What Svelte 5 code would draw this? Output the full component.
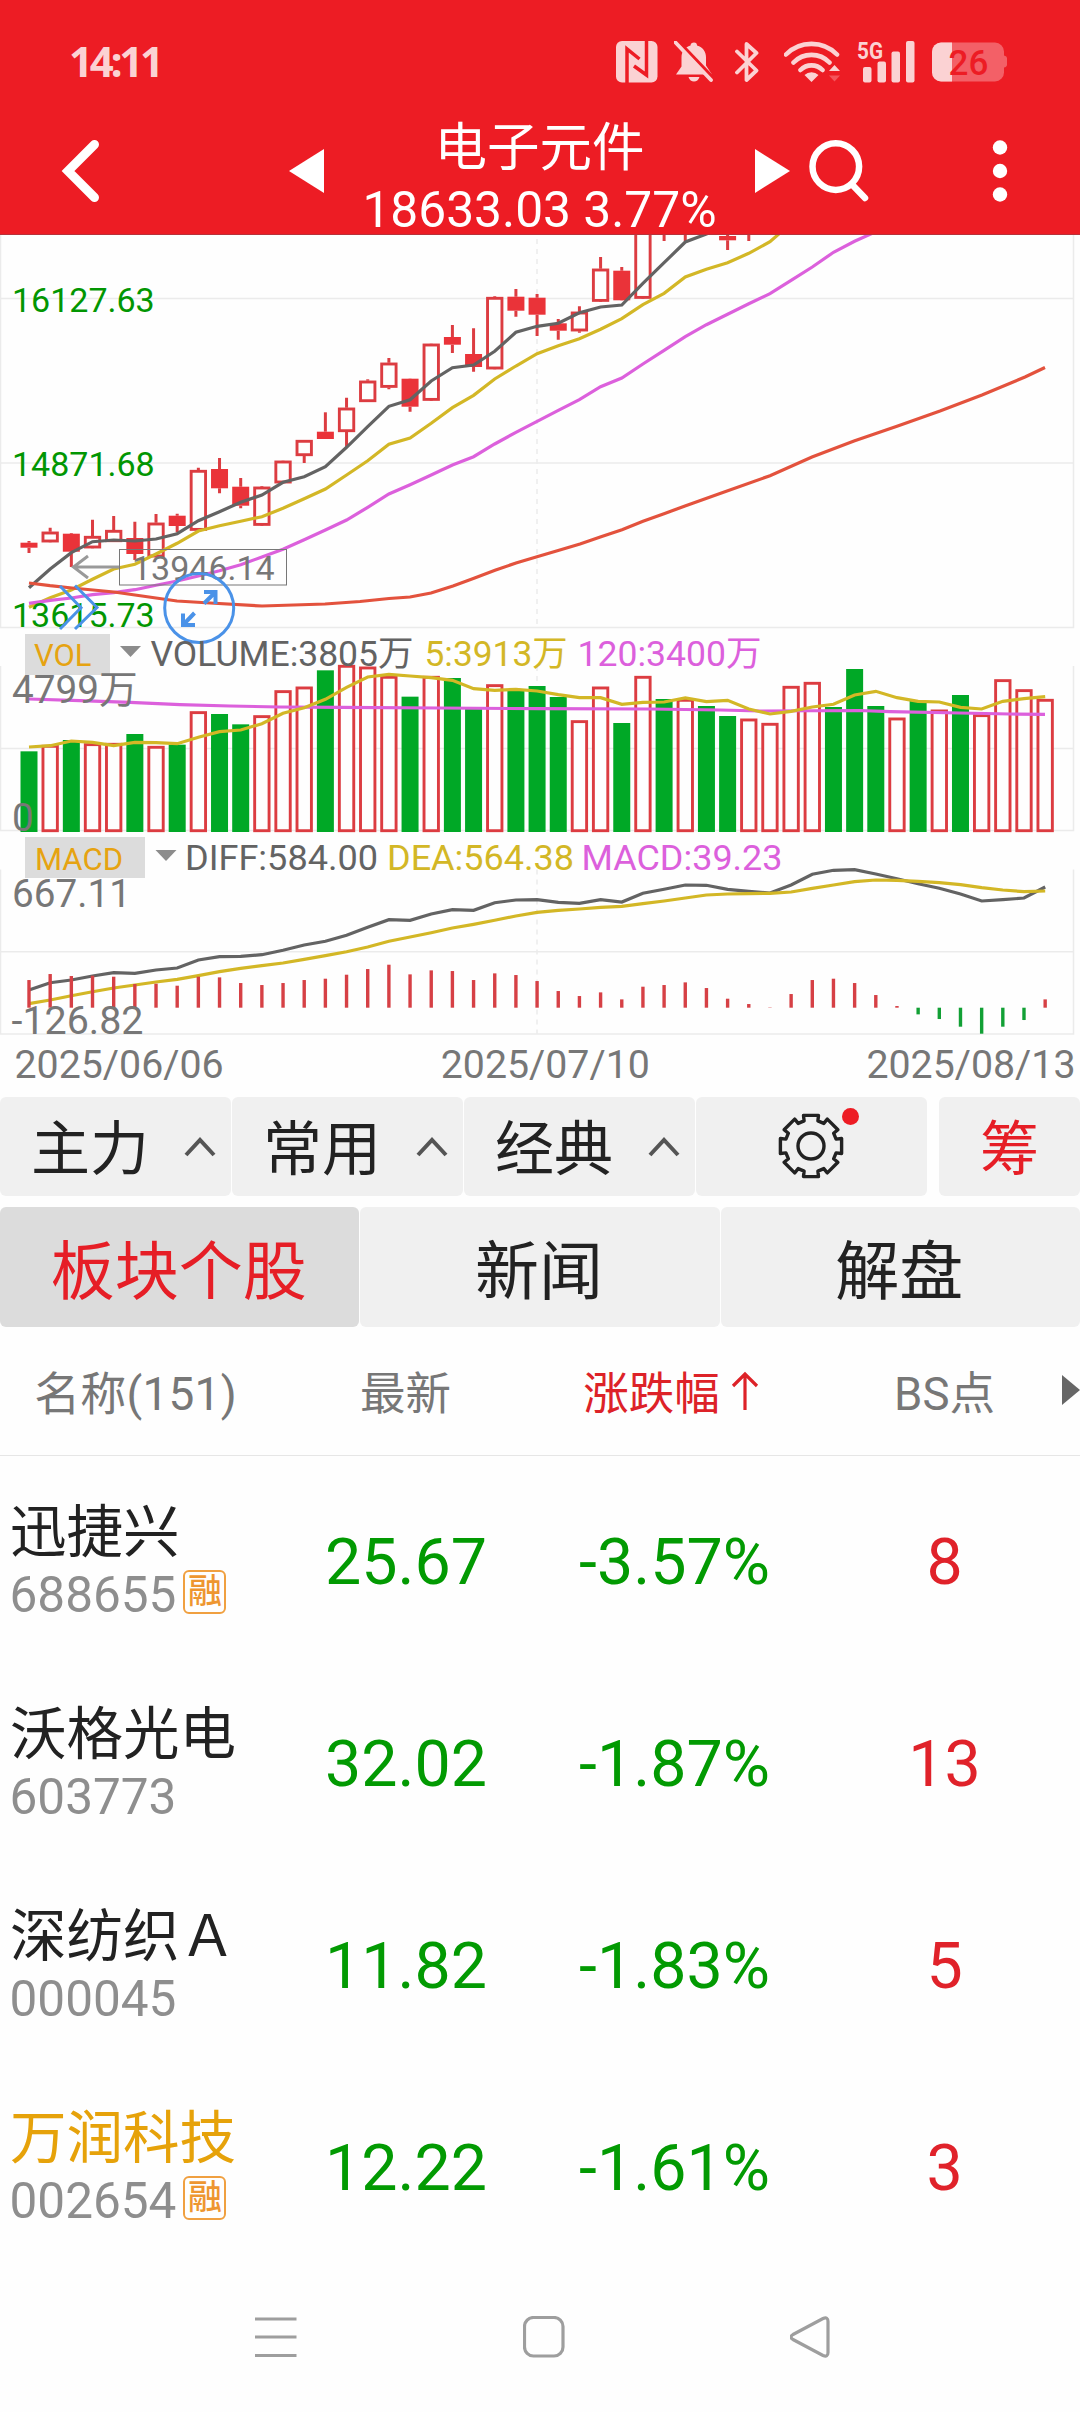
<script lang="ts">
  type Candle = [high: number, top: number, bottom: number, low: number, filled?: number];

  const X0 = 29;
  const STEP = 21.17;
  const cx = (i: number) => X0 + i * STEP;

  const line = (values: number[], top: number) =>
    values.map((v, i) => `${cx(i).toFixed(1)},${(top + v / 3).toFixed(1)}`).join(' ');

  const candles: Candle[] = [
    [541, 542.7, 547.7, 553, 1], [527.7, 531.7, 542.3, 542], [533, 533.7, 551.7, 567, 1],
    [519.7, 536, 548.3, 548], [516, 530, 542, 542], [521.7, 538, 554, 560, 1],
    [514, 522.7, 557.3, 557], [513.7, 515.7, 526, 532.3, 1], [467.7, 470, 530.7, 530],
    [458, 469, 488.3, 493.3, 1], [478, 486.7, 505.7, 508.3, 1], [486, 486.7, 525.7, 525],
    [461, 460.7, 483.3, 483], [440, 440, 456, 463], [412.3, 431.7, 439, 439, 1],
    [397.7, 407.7, 432, 446.7], [379.3, 380.7, 402, 402], [358, 362.7, 387.7, 389.3],
    [379, 378.7, 406.7, 411.7, 1], [344, 343.7, 400.7, 400], [325, 337, 344.7, 353, 1],
    [328.3, 354, 367, 371.7, 1], [296.3, 297, 369.3, 369], [289, 296.7, 310.7, 316.7, 1],
    [294, 297.7, 314.7, 336, 1], [319, 323.3, 330.7, 339.7, 1], [306.3, 311.7, 331.3, 332.7],
    [257, 268.7, 301.7, 301], [267, 270.7, 300.3, 300, 1], [220, 220, 298.7, 298],
    [210, 210, 225, 241], [210, 210, 225, 241], [190, 190, 210, 220],
    [220, 236, 240.3, 250, 1], [210, 210, 225, 241],
  ];

  const ma5 = [1073, 1017, 968, 935, 930, 933, 927, 911, 872, 845, 817, 795, 757, 740, 710, 652, 590, 529, 509, 453, 413, 405, 364, 307, 289, 280, 248, 231, 225, 160, 98, 36, 12, -15];
  const ma10 = [1132, 1103, 1080, 1048, 1017, 1003, 972, 940, 903, 887, 874, 860, 835, 806, 777, 735, 692, 643, 624, 580, 533, 496, 447, 408, 371, 347, 326, 298, 266, 224, 190, 141, 118, 98, 70, 35, -20];
  const ma20 = [1120, 1111, 1104, 1094, 1088, 1079, 1066, 1053, 1038, 1022, 1004, 981, 958, 929, 900, 870, 832, 792, 764, 735, 705, 680, 642, 607, 574, 541, 509, 470, 444, 402, 361, 320, 284, 253, 221, 191, 151, 111, 67, 34, 5];
  const ma60 = '29,583 50,585.7 72,588 114,592 135,595 156,598 177,601 210,603 262,606 325,604 360,601.5 389,598.5 410,597 431,593 453,586 474,578.3 495,570.3 516,563 537,556.7 559,550.3 580,544 601,536.7 622,529.7 643,521.3 664,513.7 685,506 720,493.5 770,475.7 812,457 854,441 897,426.3 940,411 982,395 1025,377 1045,367.5';

  const volumes = [394, 375, 360, 370, 369, 342, 378, 374, 274, 282, 313, 286, 211, 200, 151, 135, 140, 168, 230, 168, 174, 265, 193, 209, 198, 231, 301, 200, 309, 168, 237, 237, 258, 288, 296, 309, 198, 186, 261, 147, 258, 293, 243, 269, 225, 283, 178, 208, 237];
  const volumeDown = new Set([0, 2, 5, 7, 9, 10, 14, 18, 20, 21, 23, 24, 25, 28, 30, 32, 33, 38, 39, 40, 42, 44]);
  const volMa5 = [381, 377, 363, 367, 377, 367, 368, 371, 352, 335, 330, 311, 280, 263, 238, 202, 171, 163, 168, 173, 181, 206, 211, 208, 213, 224, 233, 233, 253, 247, 246, 234, 245, 241, 267, 282, 274, 261, 253, 225, 214, 233, 244, 246, 262, 267, 244, 236, 230];
  const volMa120 = '29,699 80,700.7 130,702.3 180,704.7 230,706 280,707 340,707.3 440,708 540,708.7 650,709 720,710 760,711 860,710.5 890,711.7 960,713 1010,714 1045,714.3';

  const diff = [480, 458, 450, 438, 428, 430, 420, 414, 390, 380, 379, 374, 361, 345, 334, 316, 292, 269, 271, 252, 239, 241, 218, 210, 209, 217, 220, 209, 216, 190, 178, 165, 166, 178, 184, 189, 165, 133, 121, 119, 132, 146, 161, 175, 192, 213, 209, 204, 171];
  const dea = [521, 510, 497, 485, 474, 465, 456, 448, 437, 425, 415, 407, 399, 388, 377, 365, 351, 334, 321, 308, 294, 283, 271, 258, 247, 241, 237, 232, 229, 221, 213, 204, 195, 192, 191, 190, 186, 175, 165, 155, 150, 151, 154, 158, 164, 173, 180, 185, 183];
  const macd = [83, 101, 95, 96, 93, 71, 72, 66, 93, 91, 74, 68, 74, 83, 87, 99, 116, 129, 100, 112, 110, 83, 103, 98, 80, 50, 35, 46, 25, 63, 68, 76, 59, 27, 11, 1, 41, 83, 87, 74, 38, 5, -20, -34, -57, -78, -57, -37, 25];

  const menus = ['主力', '常用', '经典'];
  const tabs = ['板块个股', '新闻', '解盘'];
  let activeTab = 0;

  const stocks = [
    { name: '迅捷兴', code: '688655', margin: true, price: '25.67', change: '-3.57%', bs: 8 },
    { name: '沃格光电', code: '603773', margin: false, price: '32.02', change: '-1.87%', bs: 13 },
    { name: '深纺织Ａ', code: '000045', margin: false, price: '11.82', change: '-1.83%', bs: 5 },
    { name: '万润科技', code: '002654', margin: true, price: '12.22', change: '-1.61%', bs: 3, starred: true },
  ];

  // eight-tooth gear outline
  const gear = Array.from({ length: 8 }, (_, k) => {
    const a = (k * Math.PI) / 4 - Math.PI / 2;
    return [[-0.27, 26], [-0.24, 31.5], [0.24, 31.5], [0.27, 26]]
      .map(([d, r]) => `${(Math.cos(a + d) * r).toFixed(1)},${(Math.sin(a + d) * r).toFixed(1)}`)
      .join(' ');
  }).join(' ');
</script>

<div class="screen">
  <header>
    <div class="status">
      <span class="clock">14:11</span>
      <svg class="nfc" width="42" height="42" viewBox="0 0 42 42">
        <rect x="0" y="0" width="41.500" height="41.500" rx="6" class="pale" />
        <path d="M11 42V8L23.500 18M30.500 0V34L18 25" class="cut" />
      </svg>
      <svg class="bell" width="40" height="42" viewBox="0 0 40 42">
        <path d="M20 1.500c2 0 3 1.300 3 3 6 1.500 9 6.500 9 12v8l6 9H2l5.500-8v-9c0-6 3.500-10.500 9-12 0-1.700 1.500-3 3.500-3zM14.500 36h11c-1 3-3 4.500-5.500 4.500s-4.500-1.500-5.500-4.500z" class="pale" />
        <path d="M3-1L42 40" class="cut" />
        <path d="M1.500 1.500L37 39" class="paleline" />
      </svg>
      <svg class="bt" width="24" height="42" viewBox="0 0 24 42">
        <path d="M2 10.500L21.500 29.500 11.500 39V3L21.500 12 2 31.500" class="paleline" />
      </svg>
      <svg class="wifi" width="57" height="42" viewBox="0 0 57 42">
        <path d="M2 13.500a36 36 0 0 1 51 0M9.500 21.500a25 25 0 0 1 36 0M16.500 29a15.500 15.500 0 0 1 22 0" class="paleline wide" />
        <path d="M27.500 41L20.500 34a10 10 0 0 1 14 0zM45 30l5.500-6 5.500 6z" class="pale" />
        <path d="M45 34.500l5.500 6 5.500-6z" class="faint" />
      </svg>
      <svg class="cell" width="58" height="42" viewBox="0 0 58 42">
        <text x="0" y="17.500" class="fiveg" textLength="26" lengthAdjust="spacingAndGlyphs">5G</text>
        <rect x="6" y="26" width="8.500" height="15.500" rx="2" class="pale" />
        <rect x="20.500" y="20.500" width="8.500" height="21" rx="2" class="pale" />
        <rect x="34.500" y="10.500" width="8.500" height="31" rx="2" class="pale" />
        <rect x="49" y="0" width="8.500" height="41.500" rx="2" class="pale" />
      </svg>
      <svg class="battery" width="75" height="42" viewBox="0 0 75 42">
        <path d="M9 1.500h54a9 9 0 0 1 9 9v4q3 .5 3 3v6q0 2.500-3 3v5a9 9 0 0 1-9 9H9a9 9 0 0 1-9-9v-21a9 9 0 0 1 9-9z" class="shade" />
        <path d="M9 1.500h11v39H9a9 9 0 0 1-9-9v-21a9 9 0 0 1 9-9z" class="pale" />
        <text x="16.500" y="33.500" class="level">26</text>
      </svg>
    </div>
    <div class="titlebar">
      <svg class="back" width="40" height="64" viewBox="0 0 40 64">
        <path d="M33.500 5.500L7 32l26.500 26.500" />
      </svg>
      <svg class="prev" width="35" height="44" viewBox="0 0 35 44"><path d="M35 0v44L0 22z" /></svg>
      <div class="title">
        <span class="board">电子元件</span>
        <span class="quote">18633.03 3.77%</span>
      </div>
      <svg class="next" width="35" height="44" viewBox="0 0 35 44"><path d="M0 0v44l35-22z" /></svg>
      <svg class="search" width="61" height="62" viewBox="0 0 61 62">
        <circle cx="26.800" cy="26.600" r="23.300" />
        <path d="M43.500 45L56 58" />
      </svg>
      <svg class="more" width="16" height="64" viewBox="0 0 16 64">
        <circle cx="8" cy="8.500" r="7.200" /><circle cx="8" cy="32" r="7.200" /><circle cx="8" cy="55.500" r="7.200" />
      </svg>
    </div>
  </header>

  <svg class="chart" width="1080" height="862" viewBox="0 235 1080 862">
    <g class="grid">
      <path d="M.5 235V627.500H1073.500V235M0 298.500H1073M0 463H1073" />
      <path d="M.5 666V830.500H1073.500V666M0 748.500H1073" />
      <path d="M.5 869.500V1034H1073.500V869.500M0 951.700H1073" />
      <path class="dashed" d="M537 239V627M537 666V830M537 869.500V1034" />
    </g>

    {#each candles as [high, top, bottom, low, filled], i}
      <path class="wick" d="M{cx(i)} {high}V{top}M{cx(i)} {bottom}V{low}" />
      {#if filled}
        <rect class="solid" x={cx(i) - 8.5} y={top} width="17" height={bottom - top} />
      {:else}
        <rect class="hollow" x={cx(i) - 7.2} y={top + 1.3} width="14.400" height={Math.max(bottom - top - 2.6, 1)} />
      {/if}
    {/each}
    <polyline class="dark" points={line(ma5, 230)} />
    <polyline class="gold" points={line(ma10, 230)} />
    <polyline class="pink" points={line(ma20, 230)} />
    <polyline class="rust" points={ma60} />

    <g class="price">
      <text x="12" y="311.700">16127.63</text>
      <text x="12" y="476">14871.68</text>
      <text x="12" y="626.700">13615.73</text>
    </g>
    <g class="low">
      <path d="M119 567H74M88 556L73.500 567 88 578" />
      <rect x="119.500" y="549.500" width="167" height="35.500" />
      <text x="132" y="580">13946.14</text>
    </g>
    <g class="tools">
      <path d="M60 586L81 607.700 60 629M75 585.500L97 607.500 75 629" />
      <circle cx="199.200" cy="608" r="34.500" />
      <path class="bold" d="M204 603.500L215 592.500M204 592H215.500V604M194.500 613L183.500 624.500M183 613.500V625H195" />
    </g>

    <rect class="tag" x="25" y="634" width="85" height="41" />
    <text class="tagtext" x="34" y="665.700">VOL</text>
    <path class="caret" d="M120 646h21l-10.500 11z" />
    {#each volumes as v, i}
      {#if volumeDown.has(i)}
        <rect class="down" x={cx(i) - 8.5} y={620 + v / 3} width="17" height={212 - v / 3} />
      {:else}
        <rect class="hollow" x={cx(i) - 7.2} y={621.3 + v / 3} width="14.400" height={209.4 - v / 3} />
      {/if}
    {/each}
    <g class="legend">
      <text class="c-dark" x="150.500" y="665.700" textLength="263" lengthAdjust="spacingAndGlyphs">VOLUME:3805万</text>
      <text class="c-gold" x="424.500" y="665.700" textLength="143" lengthAdjust="spacingAndGlyphs">5:3913万</text>
      <text class="c-pink" x="577.500" y="665.700" textLength="184" lengthAdjust="spacingAndGlyphs">120:3400万</text>
    </g>
    <polyline class="pink" points={volMa120} />
    <polyline class="gold" points={line(volMa5, 620)} />
    <text class="axis" x="12" y="703">4799万</text>
    <text class="axis" x="12" y="830.500">0</text>

    <rect class="tag" x="25" y="837" width="120" height="41" />
    <text class="tagtext" x="35" y="870" textLength="88" lengthAdjust="spacingAndGlyphs">MACD</text>
    <path class="caret" d="M155.500 850h21l-10.500 11z" />
    <g class="legend">
      <text class="c-dark" x="185" y="870" textLength="193" lengthAdjust="spacingAndGlyphs">DIFF:584.00</text>
      <text class="c-gold" x="387" y="870" textLength="187" lengthAdjust="spacingAndGlyphs">DEA:564.38</text>
      <text class="c-pink" x="581.500" y="870" textLength="201" lengthAdjust="spacingAndGlyphs">MACD:39.23</text>
    </g>
    <polyline class="dark" points={line(diff, 830)} />
    <polyline class="gold" points={line(dea, 830)} />
    {#each macd as v, i}
      <path class={v > 0 ? 'rise' : 'fall'} d="M{cx(i)} 1007.700v{-v / 3}" />
    {/each}
    <text class="axis" x="12" y="907">667.11</text>
    <text class="axis" x="11.500" y="1034" textLength="132" lengthAdjust="spacingAndGlyphs">-126.82</text>

    <text class="axis date" x="14.500" y="1078">2025/06/06</text>
    <text class="axis date" x="545.300" y="1078" text-anchor="middle">2025/07/10</text>
    <text class="axis date" x="1075.500" y="1078" text-anchor="end">2025/08/13</text>
  </svg>

  <div class="menus">
    {#each menus as menu}
      <button class="menu">
        {menu}
        <svg width="32" height="20" viewBox="0 0 32 20"><path d="M2 18L16 3l14 15" /></svg>
      </button>
    {/each}
    <button class="menu settings" aria-label="settings">
      <svg width="66" height="66" viewBox="-33 -33 66 66">
        <polygon points={gear} />
        <circle r="13" />
      </svg>
      <i class="dot"></i>
    </button>
    <button class="menu chips">筹</button>
  </div>

  <div class="tabs">
    {#each tabs as tab, i}
      <button class="tab" class:active={i === activeTab} on:click={() => (activeTab = i)}>{tab}</button>
    {/each}
  </div>

  <div class="row head">
    <span class="first">名称(151)</span>
    <span>最新</span>
    <span class="sorted">涨跌幅<svg width="28" height="40" viewBox="0 0 28 40"><path d="M14 39V3M2 15L14 3l12 12" /></svg></span>
    <span class="last">BS点<svg width="18" height="30" viewBox="0 0 18 30"><path d="M0 0l18 15L0 30z" /></svg></span>
  </div>

  <div class="list">
    {#each stocks as stock}
      <div class="row stock">
        <div class="who">
          <span class="name" class:starred={stock.starred}>{stock.name}</span>
          <span class="code">{stock.code}{#if stock.margin}<b class="badge">融</b>{/if}</span>
        </div>
        <span class="num">{stock.price}</span>
        <span class="num">{stock.change}</span>
        <span class="num bs">{stock.bs}</span>
      </div>
    {/each}
  </div>

  <nav>
    <svg width="42" height="42" viewBox="0 0 42 42"><path d="M0 3H41.500M0 21H41.500M0 39.500H41.500" /></svg>
    <svg width="42" height="42" viewBox="0 0 42 42"><rect x="1.500" y="1.500" width="38.500" height="38.500" rx="9" /></svg>
    <svg width="42" height="42" viewBox="0 0 42 42"><path d="M3 18.500L33 2.500q5-2 5 3V36.500q0 5-5 3L3 23.500q-4-2.500 0-5z" /></svg>
  </nav>
</div>

<style>
  :global(body) {
    background: #fefefe;
  }

  .screen {
    width: 1080px;
    height: 2412px;
    overflow: hidden;
    display: flex;
    flex-direction: column;
    background: #fefefe;
    color: #222;
    font-family: Roboto, 'Noto Sans CJK SC', sans-serif;
  }

  header {
    height: 235px;
    box-sizing: border-box;
    background: #ed1c24;
    border-bottom: 1px solid #b8323a;
    color: #fff;
  }

  .status {
    display: flex;
    align-items: flex-start;
    height: 65px;
    padding: 41px 73px 0 69px;
  }

  .clock {
    flex: 1;
    margin-top: -4px;
    font: 700 42px/48px 'Noto Sans', sans-serif;
    letter-spacing: -3.2px;
    color: #fbd2d3;
  }

  .bell { margin-left: 16px; }
  .bt { margin-left: 21px; }
  .wifi { margin-left: 25px; }
  .cell { margin-left: 16px; overflow: visible; }
  .battery { margin-left: 17px; }

  .pale { fill: #fbd2d3; }
  .faint { fill: #f4545b; }
  .shade { fill: #f36067; }
  .cut { fill: none; stroke: #ed1c24; stroke-width: 3.5; }
  .paleline { fill: none; stroke: #fbd2d3; stroke-width: 3.8; stroke-linecap: round; stroke-linejoin: round; }
  .paleline.wide { stroke-width: 4.6; }
  .fiveg { font: 700 23px/22px Roboto, sans-serif; fill: #fbd2d3; }
  .level { font: 500 35px Roboto, sans-serif; fill: #ed1c24; }

  .titlebar {
    display: flex;
    align-items: center;
    height: 130px;
    padding: 0 72px 0 61px;
  }

  .back { fill: none; stroke: #fff; stroke-width: 9; stroke-linecap: round; }
  .prev, .next, .more { fill: #fff; }
  .prev { margin-left: 188px; }
  .search { margin-left: 19px; fill: none; stroke: #fff; stroke-width: 6.5; stroke-linecap: round; }
  .more { margin-left: 122px; }

  .title {
    flex: 1;
    display: flex;
    flex-direction: column;
    align-items: center;
    padding-top: 15px;
  }

  .board {
    font-size: 52.5px;
    line-height: 62px;
  }

  .quote {
    font-size: 49.7px;
    line-height: 62px;
    white-space: nowrap;
  }

  .chart {
    display: block;
    flex: none;
  }

  .chart polyline { fill: none; stroke-width: 3.2; }
  .grid path { fill: none; stroke: #ebebeb; stroke-width: 1.5; }
  .grid .dashed { stroke-dasharray: 5 5; }
  .wick { stroke: #dc3c41; stroke-width: 3; }
  .solid { fill: #ea3339; }
  .hollow { fill: #fefefe; stroke: #dc3c41; stroke-width: 2.9; }
  .down { fill: #00a826; }
  .rise { stroke: #d64045; stroke-width: 3.4; }
  .fall { stroke: #12a035; stroke-width: 3.4; }
  .chart .dark { stroke: #636363; }
  .chart .gold { stroke: #d3b726; }
  .chart .pink { stroke: #dc60dc; }
  .chart .rust { stroke: #e3523d; }
  .price { font-size: 34px; fill: #029602; }
  .low { font-size: 34px; fill: #777; }
  .low path { fill: none; stroke: #999; stroke-width: 3; }
  .low rect { fill: none; stroke: #777; stroke-width: 1; }
  .tools { fill: none; stroke: #4a92e8; stroke-width: 3; }
  .tools .bold { stroke-width: 4; }
  .tag { fill: #dcdcdc; }
  .tagtext { font-size: 31px; fill: #e6a311; }
  .caret { fill: #8c8c8c; }
  .legend { font-size: 35.5px; }
  .c-dark { fill: #636363; }
  .c-gold { fill: #d3b726; }
  .c-pink { fill: #dc60dc; }
  .axis { font-size: 38.7px; fill: #777; }
  .date { font-size: 39.3px; }

  button {
    border: 0;
    padding: 0;
    font: inherit;
    color: inherit;
    background: #f0f0f0;
    border-radius: 6px;
  }

  .menus {
    display: flex;
    gap: 1px;
    height: 99px;
    flex: none;
  }

  .menu {
    display: flex;
    align-items: center;
    justify-content: space-between;
    width: 231px;
    box-sizing: border-box;
    padding: 0 15px 4px 31px;
    font-size: 59px;
  }

  .menu svg { margin-top: 4px; }

  .menu path {
    fill: none;
    stroke: #555;
    stroke-width: 4;
  }

  .settings {
    position: relative;
    justify-content: center;
    padding: 0;
  }

  .settings svg { margin: -2px 2px 0 0; }

  .settings polygon, .settings circle {
    fill: none;
    stroke: #222;
    stroke-width: 3.4;
    stroke-linejoin: round;
  }

  .dot {
    position: absolute;
    top: 11px;
    left: 146px;
    width: 17px;
    height: 17px;
    border-radius: 50%;
    background: #ed1c24;
  }

  .chips {
    width: 141px;
    margin-left: 11px;
    padding: 0 0 4px;
    justify-content: center;
    color: #e61e26;
  }

  .tabs {
    display: flex;
    gap: 1px;
    height: 120px;
    margin-top: 11px;
    flex: none;
  }

  .tab {
    flex: 1;
    padding: 0 2px 3px 0;
    font-size: 64px;
  }

  .tab.active {
    background: #dcdcdc;
    color: #e61e26;
  }

  .row {
    display: grid;
    grid-template-columns: 271px 269px 268px 272px;
    align-items: center;
    text-align: center;
  }

  .head {
    height: 125px;
    flex: none;
    padding-bottom: 3px;
    border-bottom: 1.5px solid #e6e6e6;
    font-size: 45.500px;
    color: #777;
  }

  .head .first {
    font-size: 46px;
    letter-spacing: 0.2px;
  }

  .head .sorted {
    display: flex;
    justify-content: center;
    align-items: center;
    gap: 11px;
    padding-right: 6px;
    color: #dd2228;
  }

  .sorted svg { margin-top: 3px; }
  .sorted path { fill: none; stroke: #dd2228; stroke-width: 3.2; }

  .head .last {
    display: grid;
    grid-template-columns: 19px 1fr 18px;
    align-items: center;
  }

  .head .last::before { content: ''; }
  .last path { fill: #666; }

  .list { padding-top: 5px; }

  .stock {
    height: 202px;
  }

  .who {
    display: flex;
    flex-direction: column;
    align-items: flex-start;
    padding: 2px 0 0 10px;
    white-space: nowrap;
  }

  .name {
    font-size: 56.500px;
    line-height: 64px;
  }

  .starred { color: #e6a20a; }

  .code {
    display: flex;
    align-items: center;
    gap: 7px;
    margin-left: -0.5px;
    font-size: 49.500px;
    line-height: 60px;
    color: #8e8e8e;
  }

  .badge {
    width: 39px;
    height: 40px;
    margin-top: -6px;
    border: 2.5px solid #f0a040;
    border-radius: 6px;
    font-size: 34px;
    font-weight: 500;
    line-height: 38px;
    text-align: center;
    color: #ee9630;
  }

  .num {
    padding-left: 1px;
    font-size: 64.500px;
    color: #029a02;
  }

  .bs { color: #e0222a; }

  nav {
    display: flex;
    justify-content: space-between;
    padding: 0 248px 0 255px;
    margin-top: 47px;
  }

  nav svg {
    fill: none;
    stroke: #9e9e9e;
    stroke-width: 3.2;
  }
</style>
